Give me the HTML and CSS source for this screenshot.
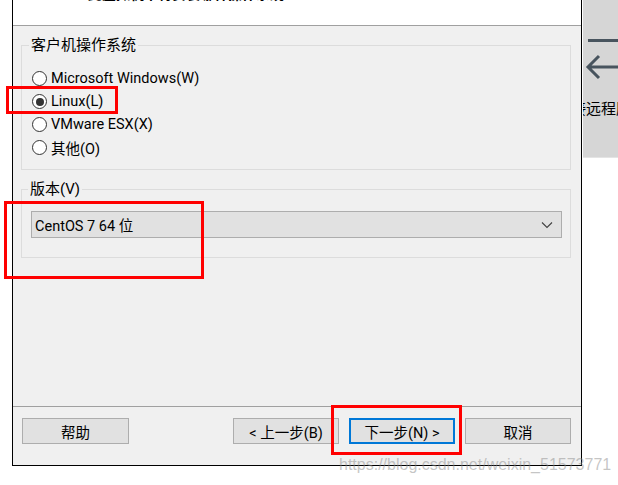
FILE: index.html
```html
<!DOCTYPE html>
<html lang="zh-CN">
<head>
    <meta charset="UTF-8">
    <meta name="viewport" content="width=device-width, initial-scale=1.0">
    <title>新建虚拟机向导</title>
    <link rel="stylesheet" href="styles.css">
</head>
<body>

    <div class="screen">
        <div class="gutter"></div>

        <!-- Wizard dialog -->
        <div class="dialog">
            <div class="banner">
                <p class="subtitle">此虚拟机中将安装哪种操作系统?</p>
            </div>

            <div class="content">
                <fieldset class="group os-group">
                    <legend>客户机操作系统</legend>
                    <label class="option"><span class="radio"></span>Microsoft Windows(W)</label>
                    <label class="option"><span class="radio checked"></span>Linux(L)</label>
                    <label class="option"><span class="radio"></span>VMware ESX(X)</label>
                    <label class="option"><span class="radio"></span>其他(O)</label>
                </fieldset>

                <fieldset class="group version-group">
                    <legend>版本(V)</legend>
                    <div class="select">
                        <span>CentOS 7 64 位</span>
                        <svg class="chevron" width="12" height="8" viewBox="0 0 12 8">
                            <path d="M1 1.5 L6 6.5 L11 1.5" fill="none" stroke="#404040" stroke-width="1.1"/>
                        </svg>
                    </div>
                </fieldset>
            </div>

            <div class="footer">
                <button class="btn help">帮助</button>
                <button class="btn">&lt; 上一步(B)</button>
                <button class="btn default">下一步(N) &gt;</button>
                <button class="btn">取消</button>
            </div>
        </div>

        <!-- Sidebar tile behind the dialog -->
        <div class="side">
            <div class="side-tile">
                <svg class="side-icon" width="40" height="62" viewBox="0 0 40 62">
                    <rect x="5" y="19" width="40" height="3" fill="#48545e"/>
                    <path d="M16 36 L5 47 L16 58 M5 47 H40" fill="none" stroke="#48545e" stroke-width="3"/>
                </svg>
                <div class="side-label">连接远程服务器</div>
            </div>
        </div>

        <!-- annotations -->
        <div class="mark mark-linux"></div>
        <div class="mark mark-version"></div>
        <div class="mark mark-next"></div>
        <div class="watermark">https://blog.csdn.net/weixin_51573771</div>
    </div>

</body>
</html>
```

FILE: styles.css
```css
body {
    margin: 0;
    background-color: #fff;
    font-family: Roboto, "Noto Sans CJK SC", sans-serif;
    font-size: 14.5px;
    color: #000;
    overflow: hidden;
}

.screen {
    position: relative;
    display: flex;
    height: 485px;
}

.gutter {
    width: 12px;
    flex-shrink: 0;
}

/* Dialog */
.dialog {
    width: 570px;
    height: 466px;
    box-sizing: border-box;
    flex-shrink: 0;
    border: 1px solid #000;
    border-top: none;
    display: flex;
    flex-direction: column;
    background-color: #f0f0f0;
}

.banner {
    height: 25px;
    background-color: #fff;
    border-bottom: 1px solid #a0a0a0;
    overflow: hidden;
}

.subtitle {
    margin: -16.5px 0 0 75px;
    font-size: 14px;
    line-height: 20px;
    font-weight: bold;
}

.content {
    flex: 1;
    padding: 10px 10px 0 8px;
}

.group {
    margin: 0;
    border: 1px solid #dcdcdc;
    min-width: 0;
}

.group legend {
    padding: 0 2px;
    margin-left: -3px;
    line-height: 18px;
    font-size: 15px;
}

.os-group {
    padding: 13px 10px 10px 10px;
}

.option {
    display: flex;
    align-items: center;
    gap: 4px;
    height: 23px;
}

.radio {
    width: 13px;
    height: 13px;
    border: 1px solid #333;
    border-radius: 50%;
    background-color: #fff;
    display: flex;
    align-items: center;
    justify-content: center;
}

.radio.checked::after {
    content: "";
    width: 8px;
    height: 8px;
    border-radius: 50%;
    background-color: #333;
}

.version-group {
    margin-top: 10px;
    padding: 13px 8px 19px 9px;
}

.select {
    height: 27px;
    box-sizing: border-box;
    border: 1px solid #adadad;
    background-color: #e1e1e1;
    display: flex;
    align-items: center;
    justify-content: space-between;
    padding: 0 8px 0 3px;
}

/* Footer buttons */
.footer {
    height: 47px;
    border-top: 1px solid #a0a0a0;
    display: flex;
    gap: 10px;
    padding: 11px 10px 0 9px;
    box-sizing: content-box;
}

.btn {
    width: 106px;
    height: 26px;
    border: 1px solid #adadad;
    background-color: #e1e1e1;
    font-family: inherit;
    font-size: 14.5px;
    padding: 0;
    color: #000;
}

.btn.help {
    width: 107px;
    margin-right: auto;
}

.btn.default {
    border: 2px solid #0078d7;
}

/* Sidebar */
.side {
    width: 60px;
    flex-shrink: 0;
    margin-left: 1px;
}

.side-tile {
    height: 157px;
    background-color: #d6d6d6;
    border-bottom: 1px solid #e4e4e4;
    overflow: hidden;
}

.side-icon {
    display: block;
    margin-top: 20px;
}

.side-label {
    white-space: nowrap;
    margin: 17px 0 0 -27px;
    line-height: 20px;
    font-size: 15px;
}

/* Annotations */
.mark {
    position: absolute;
    border: 3px solid #ff0000;
    box-sizing: border-box;
}

.mark-linux {
    left: 6px;
    top: 86px;
    width: 112px;
    height: 28px;
}

.mark-version {
    left: 4px;
    top: 201px;
    width: 200px;
    height: 78px;
}

.mark-next {
    left: 331px;
    top: 405px;
    width: 131px;
    height: 50px;
}

.watermark {
    position: absolute;
    left: 339px;
    top: 456px;
    font-family: "Liberation Sans", sans-serif;
    font-size: 16px;
    color: rgba(140, 140, 140, 0.5);
    white-space: nowrap;
}
```
